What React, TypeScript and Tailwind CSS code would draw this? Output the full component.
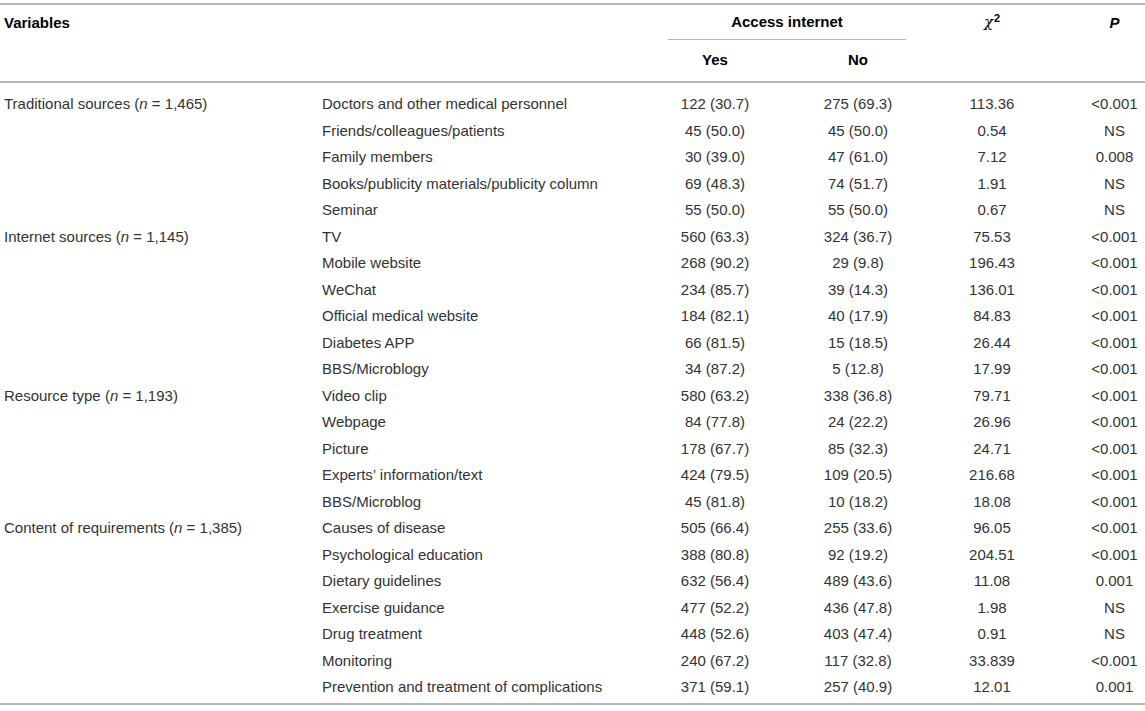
import React from 'react';

type Row = [string, string, string, string, string];
type Group = { label: string; n: string; rows: Row[] };

const groups: Group[] = [
  {
    label: 'Traditional sources',
    n: '1,465',
    rows: [
      ['Doctors and other medical personnel', '122 (30.7)', '275 (69.3)', '113.36', '<0.001'],
      ['Friends/colleagues/patients', '45 (50.0)', '45 (50.0)', '0.54', 'NS'],
      ['Family members', '30 (39.0)', '47 (61.0)', '7.12', '0.008'],
      ['Books/publicity materials/publicity column', '69 (48.3)', '74 (51.7)', '1.91', 'NS'],
      ['Seminar', '55 (50.0)', '55 (50.0)', '0.67', 'NS'],
    ],
  },
  {
    label: 'Internet sources',
    n: '1,145',
    rows: [
      ['TV', '560 (63.3)', '324 (36.7)', '75.53', '<0.001'],
      ['Mobile website', '268 (90.2)', '29 (9.8)', '196.43', '<0.001'],
      ['WeChat', '234 (85.7)', '39 (14.3)', '136.01', '<0.001'],
      ['Official medical website', '184 (82.1)', '40 (17.9)', '84.83', '<0.001'],
      ['Diabetes APP', '66 (81.5)', '15 (18.5)', '26.44', '<0.001'],
      ['BBS/Microblogy', '34 (87.2)', '5 (12.8)', '17.99', '<0.001'],
    ],
  },
  {
    label: 'Resource type',
    n: '1,193',
    rows: [
      ['Video clip', '580 (63.2)', '338 (36.8)', '79.71', '<0.001'],
      ['Webpage', '84 (77.8)', '24 (22.2)', '26.96', '<0.001'],
      ['Picture', '178 (67.7)', '85 (32.3)', '24.71', '<0.001'],
      ['Experts\u2019 information/text', '424 (79.5)', '109 (20.5)', '216.68', '<0.001'],
      ['BBS/Microblog', '45 (81.8)', '10 (18.2)', '18.08', '<0.001'],
    ],
  },
  {
    label: 'Content of requirements',
    n: '1,385',
    rows: [
      ['Causes of disease', '505 (66.4)', '255 (33.6)', '96.05', '<0.001'],
      ['Psychological education', '388 (80.8)', '92 (19.2)', '204.51', '<0.001'],
      ['Dietary guidelines', '632 (56.4)', '489 (43.6)', '11.08', '0.001'],
      ['Exercise guidance', '477 (52.2)', '436 (47.8)', '1.98', 'NS'],
      ['Drug treatment', '448 (52.6)', '403 (47.4)', '0.91', 'NS'],
      ['Monitoring', '240 (67.2)', '117 (32.8)', '33.839', '<0.001'],
      ['Prevention and treatment of complications', '371 (59.1)', '257 (40.9)', '12.01', '0.001'],
    ],
  },
];

export default function App() {
  return (
    <div className="w-[1145px] h-[711px] bg-white pt-[3px] text-[15px] text-[#333]" style={{ fontFamily: '"Liberation Sans", Arial, sans-serif' }}>
      <table className="w-full table-fixed border-collapse border-t-2 border-b-2 border-[#b5b5b5]">
        <colgroup>
          <col className="w-[318px]" />
          <col className="w-[326px]" />
          <col className="w-[142px]" />
          <col className="w-[144px]" />
          <col className="w-[124px]" />
          <col />
        </colgroup>
        <thead className="text-black font-bold">
          <tr className="h-[36px]">
            <th rowSpan={2} className="align-top text-left pl-1 pt-[7px] font-bold">Variables</th>
            <th rowSpan={2} />
            <th colSpan={2} className="p-0 align-bottom">
              <div className="pb-[6px]">Access internet</div>
              <div className="mx-6 border-b border-[#b5b5b5]" />
            </th>
            <th rowSpan={2} className="align-top pt-[6px] font-normal">
              <span className="italic" style={{ fontFamily: '"DejaVu Serif", serif' }}>χ</span>
              <sup className="font-bold text-[11px] ml-[1px]">2</sup>
            </th>
            <th rowSpan={2} className="align-top pt-[7px] pl-[30px] italic">P</th>
          </tr>
          <tr className="h-[42px] border-b-2 border-[#b5b5b5]">
            <th className="align-top pt-[9px]">Yes</th>
            <th className="align-top pt-[9px]">No</th>
          </tr>
        </thead>
        <tbody>
          <tr className="h-[9px]"><td colSpan={6} /></tr>
          {groups.map((g) =>
            g.rows.map((r, i) => (
              <tr key={g.label + i} className="h-[26.5px]">
                <td className="pl-1 align-middle">
                  {i === 0 && (
                    <span>
                      {g.label} (<span className="italic">n</span> = {g.n})
                    </span>
                  )}
                </td>
                <td className="pl-1">{r[0]}</td>
                <td className="text-center">{r[1]}</td>
                <td className="text-center">{r[2]}</td>
                <td className="text-center">{r[3]}</td>
                <td className="text-center pl-[30px]">{r[4]}</td>
              </tr>
            ))
          )}
          <tr className="h-[3px]"><td colSpan={6} /></tr>
        </tbody>
      </table>
    </div>
  );
}
